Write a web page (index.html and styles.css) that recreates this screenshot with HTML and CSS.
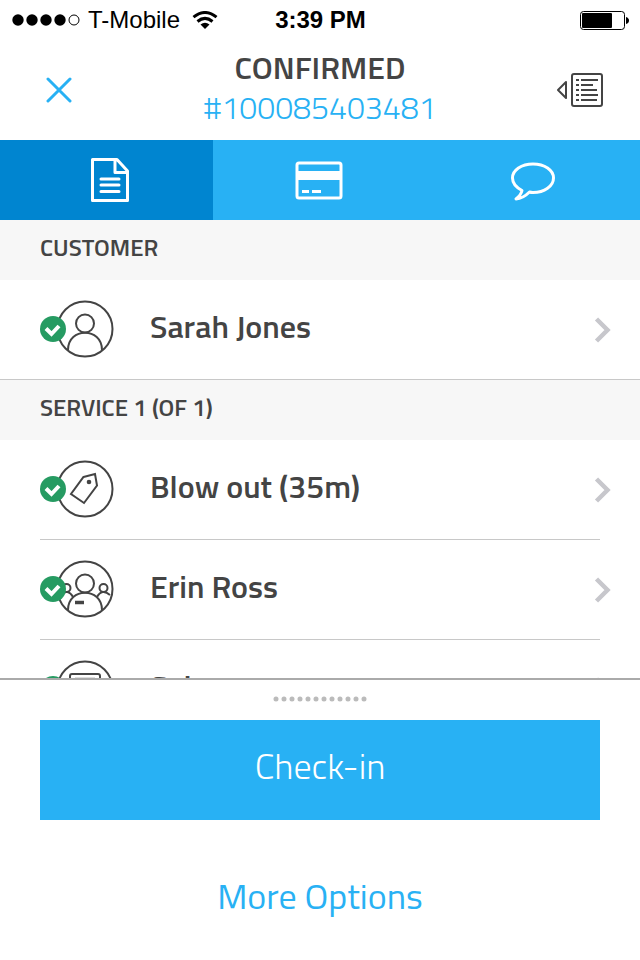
FILE: index.html
```
<!DOCTYPE html>
<html lang="en">
<head>
    <meta charset="UTF-8">
    <meta name="viewport" content="width=device-width, initial-scale=1.0">
    <title>Appointment #100085403481</title>
    <link rel="stylesheet" href="styles.css">
</head>
<body>
    <!-- shared symbols -->
    <svg class="symbols" aria-hidden="true">
        <symbol id="check" viewBox="0 0 26 26">
            <circle cx="13" cy="13" r="13" fill="#269b62"/>
            <path d="M6 12.500l5.500 5.500L19 10" fill="none" stroke="#fff" stroke-width="4"/>
        </symbol>
        <symbol id="chevron" viewBox="0 0 18 28">
            <path d="M2.500 3L13.500 14L2.500 25" fill="none" stroke="#c7c7cc" stroke-width="4.500"/>
        </symbol>
    </svg>

    <div class="status-bar">
        <div class="carrier">
            <svg width="68" height="12" viewBox="0 0 68 12">
                <circle cx="6" cy="6" r="5.700"/>
                <circle cx="20" cy="6" r="5.700"/>
                <circle cx="34" cy="6" r="5.700"/>
                <circle cx="48" cy="6" r="5.700"/>
                <circle cx="62" cy="6" r="5" fill="none" stroke="#000"/>
            </svg>
            <span>T-Mobile</span>
            <svg width="26" height="18" viewBox="0 0 26 18">
                <g fill="none" stroke="#000" stroke-width="3">
                    <path d="M1.500 6.200Q13 -3.200 24.500 6.200"/>
                    <path d="M5.500 10.500Q13 4.300 20.500 10.500"/>
                </g>
                <path d="M8.500 13.500Q13 10 17.500 13.500L13 18z"/>
            </svg>
        </div>
        <div class="time">3:39 PM</div>
        <svg class="battery" width="50" height="20" viewBox="0 0 50 20">
            <rect x="1.500" y="1.500" width="44" height="18" rx="3" fill="none" stroke="#000"/>
            <rect x="3" y="3" width="30" height="15" rx="1"/>
            <path d="M47 7q3 1 3 3.500t-3 3.500z"/>
        </svg>
    </div>

    <header class="header">
        <button class="close" type="button" aria-label="Close">
            <svg width="26" height="26" viewBox="0 0 26 26">
                <path d="M2 2L24 24M24 2L2 24" stroke="#28b1f4" stroke-width="3" stroke-linecap="round"/>
            </svg>
        </button>
        <div class="title">
            <h1>CONFIRMED</h1>
            <a href="#">#100085403481</a>
        </div>
        <button class="details" type="button" aria-label="Details">
            <svg width="48" height="36" viewBox="0 0 48 36" fill="none" stroke="#444" stroke-width="2">
                <path d="M10 10L2 18L10 26z" stroke-linejoin="round"/>
                <rect x="16" y="2" width="30" height="32" rx="2"/>
                <path d="M20 8h3M20 13h3M20 18h3M20 23h3M20 28h3M25 8h17M25 13h12M25 18h16M25 23h17M25 28h16"/>
            </svg>
        </button>
    </header>

    <nav class="tabs">
        <button class="tab active" type="button" aria-label="Summary">
            <svg width="46" height="46" viewBox="0 0 46 46" fill="none" stroke="#fff" stroke-width="3">
                <path d="M8.500 2.500H33L43.500 14V43.500H8.500zM31 2.500V15.500H43.500" stroke-linejoin="round"/>
                <path d="M17 22h18M17 28h18M17 34.500h18" stroke-linecap="round"/>
            </svg>
        </button>
        <button class="tab" type="button" aria-label="Payment">
            <svg width="50" height="40" viewBox="0 0 50 40" fill="none" stroke="#fff" stroke-width="3">
                <rect x="2" y="3" width="44" height="35" rx="2"/>
                <path d="M2 15.500h44" stroke-width="9"/>
                <path d="M7 31.500h7M17 31.500h9"/>
            </svg>
        </button>
        <button class="tab" type="button" aria-label="Messages">
            <svg width="46" height="44" viewBox="0 0 46 44" fill="none" stroke="#fff" stroke-width="3">
                <path d="M12 32.500C5.500 29 2.500 25 2.500 20C2.500 12 11.500 6 23 6S43.500 12 43.500 20S34.500 34.500 23 34.500Q21 34.500 19.500 34Q13 40.500 6 41Q11 37 12 32.500z" stroke-linejoin="round"/>
            </svg>
        </button>
    </nav>

    <main class="content">
        <section>
            <h2>CUSTOMER</h2>
            <a class="row" href="#">
                <svg class="check"><use href="#check"/></svg>
                <svg class="avatar" viewBox="0 0 58 58">
                    <circle cx="29" cy="29" r="27.500"/>
                    <circle cx="29" cy="23.500" r="9"/>
                    <path d="M12 50C12 27 46 27 46 50"/>
                </svg>
                <span class="name">Sarah Jones</span>
                <svg class="chevron"><use href="#chevron"/></svg>
            </a>
        </section>
        <section>
            <h2>SERVICE 1 (OF 1)</h2>
            <a class="row" href="#">
                <svg class="check"><use href="#check"/></svg>
                <svg class="avatar" viewBox="0 0 58 58">
                    <circle cx="29" cy="29" r="27.500"/>
                    <path d="M27.500 17L39 14L41 25.500L28 43L15 34z"/>
                    <circle class="solid" cx="33" cy="22" r="2.300"/>
                </svg>
                <span class="name">Blow out (35m)</span>
                <svg class="chevron"><use href="#chevron"/></svg>
            </a>
            <a class="row" href="#">
                <svg class="check"><use href="#check"/></svg>
                <svg class="avatar" viewBox="0 0 58 58">
                    <circle cx="29" cy="29" r="27.500"/>
                    <circle cx="29" cy="23.500" r="9"/>
                    <path d="M12 50C12 27 46 27 46 50"/>
                    <circle cx="10.500" cy="28" r="4"/>
                    <circle cx="47.500" cy="28" r="4"/>
                    <path d="M4 35Q12 28 17 37M54 35Q46 28 41 37"/>
                    <path d="M19 42.500h9" stroke-width="3.500"/>
                </svg>
                <span class="name">Erin Ross</span>
                <svg class="chevron"><use href="#chevron"/></svg>
            </a>
            <a class="row" href="#">
                <svg class="check"><use href="#check"/></svg>
                <svg class="avatar" viewBox="0 0 58 58">
                    <circle cx="29" cy="29" r="27.500"/>
                    <rect x="14" y="14" width="30" height="30" rx="2"/>
                    <path d="M19 18.500h20" stroke="#bbb"/>
                </svg>
                <span class="name">Sale</span>
                <svg class="chevron"><use href="#chevron"/></svg>
            </a>
        </section>
    </main>

    <footer class="actions">
        <svg class="grip" width="94" height="6" viewBox="0 0 94 6">
            <path d="M3 3H92" stroke="#bbb" stroke-width="5" stroke-linecap="round" stroke-dasharray="0 8"/>
        </svg>
        <button class="primary" type="button">Check-in</button>
        <button class="secondary" type="button">More Options</button>
    </footer>
</body>
</html>
```
FILE: styles.css
```
* {
    box-sizing: border-box;
}
body {
    display: flex;
    flex-direction: column;
    height: 100vh;
    margin: 0;
    background: #fff;
    color: #444;
    font-family: "Titillium Web", Roboto, sans-serif;
}
button {
    padding: 0;
    border: none;
    background: none;
    font-family: inherit;
    cursor: pointer;
}
a {
    color: inherit;
    text-decoration: none;
}
svg {
    display: block;
    flex-shrink: 0;
}
.symbols {
    position: absolute;
    width: 0;
    height: 0;
}

/* status bar */
.status-bar {
    display: grid;
    grid-template-columns: 1fr auto 1fr;
    align-items: center;
    height: 40px;
    padding: 0 11px 0 12px;
    color: #000;
    font-family: "Liberation Sans", Arial, sans-serif;
    font-size: 24px;
}
.carrier {
    display: flex;
    align-items: center;
    gap: 8px;
}
.carrier span {
    margin-right: 4px;
}
.time {
    font-weight: bold;
}
.battery {
    justify-self: end;
}

/* header */
.header {
    display: grid;
    grid-template-columns: 1fr auto 1fr;
    align-items: center;
    height: 100px;
    padding: 0 36px 0 36px;
}
.close {
    justify-self: start;
    padding: 0 10px;
}
.details {
    justify-self: end;
}
.title {
    padding-bottom: 6px;
    font-size: 32px;
    line-height: 40px;
    text-align: center;
}
.title h1 {
    margin: 0;
    font-size: 32px;
    font-weight: 600;
}
.title a {
    display: block;
    color: #28b1f4;
    font-weight: 300;
}

/* tabs */
.tabs {
    display: grid;
    grid-template-columns: repeat(3, 1fr);
    height: 80px;
}
.tab {
    display: flex;
    align-items: center;
    justify-content: center;
    background: #28b1f4;
}
.tab.active {
    background: #0085d0;
}

/* list */
.content {
    flex: 1;
    min-height: 0;
    overflow: hidden;
}
h2 {
    height: 60px;
    margin: 0;
    padding: 0 40px;
    background: #f7f7f7;
    font-size: 24px;
    font-weight: 600;
    line-height: 54px;
}
.row {
    display: flex;
    align-items: center;
    height: 100px;
    margin: 0 40px;
    border-bottom: 1px solid #c8c8c8;
}
section:first-child .row {
    margin: 0;
    padding: 0 40px;
}
.check {
    z-index: 1;
    width: 26px;
    height: 26px;
    margin: 0 -10px 2px 0;
}
.avatar {
    width: 58px;
    height: 58px;
    margin-bottom: 2px;
    fill: none;
    stroke: #444;
    stroke-width: 2;
}
.avatar .solid {
    fill: #444;
    stroke: none;
}
.name {
    flex: 1;
    padding: 0 0 8px 36px;
    font-size: 32px;
    font-weight: 600;
}
.chevron {
    width: 18px;
    height: 28px;
    margin-right: -12px;
}

/* bottom actions */
.actions {
    display: flex;
    flex-direction: column;
    padding: 16px 40px 0;
    border-top: 2px solid #aaa;
}
.grip {
    align-self: center;
    margin-bottom: 18px;
}
.primary,
.secondary {
    height: 100px;
    padding-bottom: 10px;
    font-size: 36px;
}
.primary {
    background: #28b1f4;
    color: #fff;
    font-weight: 300;
}
.secondary {
    margin: 30px 0 10px;
    color: #28b1f4;
}
```
